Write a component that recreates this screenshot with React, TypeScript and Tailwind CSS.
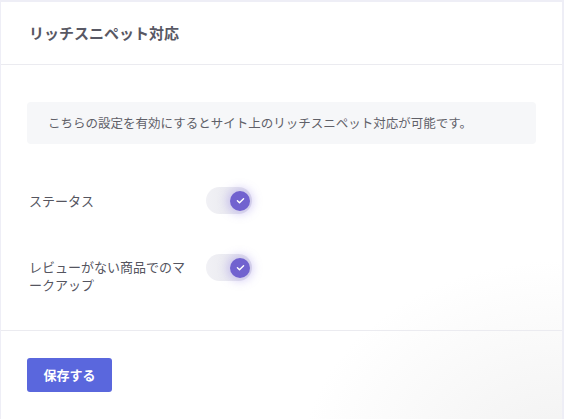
import React, { useState } from 'react';

interface ToggleProps {
  checked: boolean;
  onChange: (v: boolean) => void;
}

const Toggle = ({ checked, onChange }: ToggleProps) => (
  <button
    onClick={() => onChange(!checked)}
    className="relative flex h-[27px] w-[46px] shrink-0 items-center rounded-full bg-gradient-to-r from-[#f1f1f5] to-[#e4e4ec]"
  >
    <span
      className={`absolute top-[3.5px] flex h-5 w-5 items-center justify-center rounded-full bg-[#7162cf] shadow-[0_0_10px_3px_rgba(140,120,230,0.35)] ${
        checked ? 'left-[24px]' : 'left-[3px]'
      }`}
    >
      <svg width="11" height="11" viewBox="0 0 10 10" fill="none">
        <path d="M2.2 5.2l1.9 1.8L7.8 3.4" stroke="white" strokeWidth="1.3" strokeLinecap="round" strokeLinejoin="round" />
      </svg>
    </span>
  </button>
);

export default function App() {
  const [status, setStatus] = useState(true);
  const [markup, setMarkup] = useState(true);

  return (
    <div
      className="h-[419px] w-[564px] overflow-hidden bg-[#eeeef6] pt-[2px] pl-px pr-[2px]"
      style={{ fontFamily: '"Noto Sans CJK JP", "Noto Sans", sans-serif' }}
    >
      <div className="h-full bg-white bg-[radial-gradient(ellipse_260px_200px_at_100%_110%,#f1f1f1,#ffffff)]">
        <div className="flex h-[63px] items-center border-b border-[#ebebf0] px-7">
          <h2 className="text-[15px] font-semibold text-[#585864]">リッチスニペット対応</h2>
        </div>

        <div className="px-[26px] pt-[37px] pb-[36px]">
          <div className="flex h-[42px] items-center rounded bg-[#f6f7f9] px-[21px] text-[12.5px] text-[#606068]">
            こちらの設定を有効にするとサイト上のリッチスニペット対応が可能です。
          </div>

          <div className="mt-[43px] flex items-center">
            <div className="w-[179px] pl-[2px] text-[13px] text-[#55555f]">ステータス</div>
            <Toggle checked={status} onChange={setStatus} />
          </div>

          <div className="mt-[40px] flex items-start">
            <div className="mt-[4px] w-[179px] pl-[2px] pr-[18px] text-[13px] leading-[18px] text-[#55555f]">
              レビューがない商品でのマークアップ
            </div>
            <Toggle checked={markup} onChange={setMarkup} />
          </div>
        </div>

        <div className="border-t border-[#ebebf0] px-[26px] pt-[27px]">
          <button className="h-[34px] w-[85px] rounded-[3px] bg-[#5a67dd] text-[13px] font-bold text-white">
            保存する
          </button>
        </div>
      </div>
    </div>
  );
}
